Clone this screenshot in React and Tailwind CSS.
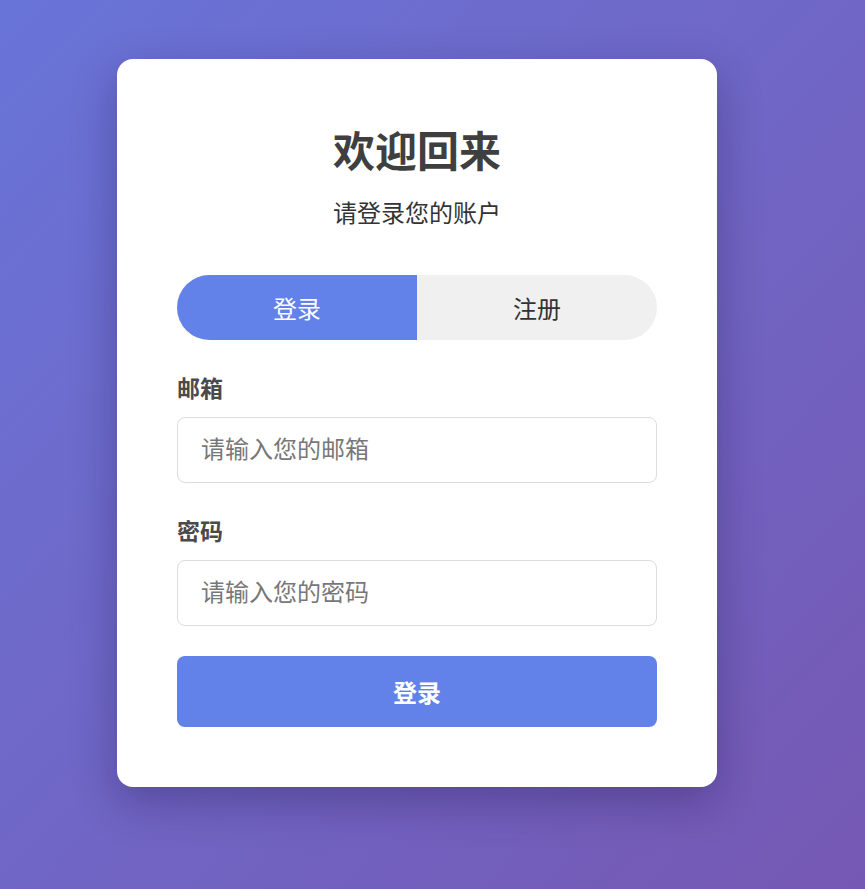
import React, { useState } from "react";

const App = () => {
  const [tab, setTab] = useState("login");

  return (
    <main
      className="min-h-screen w-full bg-gradient-to-br from-[#6874d8] to-[#7558b3] pt-[59px] pb-[60px] pl-[117px]"
      style={{ fontFamily: '"Noto Sans CJK SC", "Noto Sans", sans-serif' }}
    >
      <div className="w-[600px] bg-white rounded-2xl p-[60px] shadow-[0_15px_45px_rgba(20,10,60,0.3)]">
        <h1 className="text-[42px] leading-[60px] font-bold text-center text-[#3f3f3f]">
          欢迎回来
        </h1>
        <p className="mt-[15px] text-[24px] leading-[36px] text-center text-[#333]">
          请登录您的账户
        </p>

        <div className="mt-[45px] flex h-[65px] rounded-full overflow-hidden bg-[#f0f0f0]">
          <button
            type="button"
            onClick={() => setTab("login")}
            className={
              tab === "login"
                ? "flex-1 bg-[#6282ea] text-white text-[24px]"
                : "flex-1 text-[#333] text-[24px]"
            }
          >
            登录
          </button>
          <button
            type="button"
            onClick={() => setTab("register")}
            className={
              tab === "register"
                ? "flex-1 bg-[#6282ea] text-white text-[24px]"
                : "flex-1 text-[#333] text-[24px]"
            }
          >
            注册
          </button>
        </div>

        <form className="flex flex-col">
          <div className="mt-[30px] flex flex-col">
            <label htmlFor="email" className="text-[23px] leading-[34px] font-bold text-[#4a4a4a] mb-[13px]">
              邮箱
            </label>
            <input
              id="email"
              type="email"
              placeholder="请输入您的邮箱"
              className="h-[66px] px-[23px] pb-[5px] border border-[#dcdcdc] rounded-lg text-[24px] text-[#333] placeholder:text-[#777] outline-none"
            />
          </div>
          <div className="mt-[30px] flex flex-col">
            <label htmlFor="password" className="text-[23px] leading-[34px] font-bold text-[#4a4a4a] mb-[13px]">
              密码
            </label>
            <input
              id="password"
              type="password"
              placeholder="请输入您的密码"
              className="h-[66px] px-[23px] pb-[5px] border border-[#dcdcdc] rounded-lg text-[24px] text-[#333] placeholder:text-[#777] outline-none"
            />
          </div>
          <button
            type="button"
            className="mt-[30px] h-[71px] rounded-lg bg-[#6282ea] text-white text-[24px] font-bold"
          >
            登录
          </button>
        </form>
      </div>
    </main>
  );
};

export default App;
